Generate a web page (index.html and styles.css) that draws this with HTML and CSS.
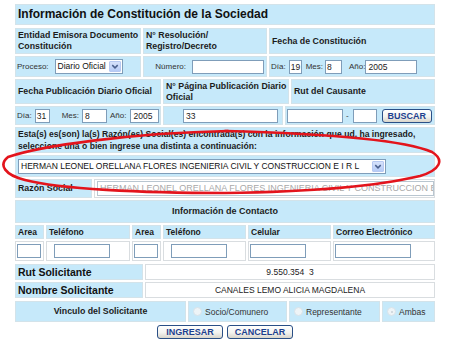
FILE: index.html
```html
<!DOCTYPE html>
<html lang="es">
<head>
<meta charset="utf-8">
<title>Información de Constitución de la Sociedad</title>
<link rel="stylesheet" href="styles.css">
</head>
<body>
<div class="page">
  <div class="title">Información de Constitución de la Sociedad</div>

  <div class="row r2">
    <div class="cell hd">Entidad Emisora Documento<br>Constitución</div>
    <div class="cell hd">N° Resolución/<br>Registro/Decreto</div>
    <div class="cell hd">Fecha de Constitución</div>
  </div>

  <div class="row r3">
    <div class="cell fl">
      <span class="lbl">Proceso:</span>
      <div class="sel s-proc"><span class="sv">Diario Oficial</span><span class="arr"><svg width="11" height="11" viewBox="0 0 11 11"><polyline points="2.5,4 5.5,7 8.5,4" fill="none" stroke="#4a5f8c" stroke-width="1.6"/></svg></span></div>
    </div>
    <div class="cell fl end">
      <span class="lbl mr6">Número:</span><span class="inp w72"></span>
    </div>
    <div class="cell fl">
      <span class="lbl">Día:</span><span class="inp sm w13 ml3">19</span>
      <span class="lbl ml4">Mes:</span><span class="inp sm w17 ml2">8</span>
      <span class="lbl ml7">Año:</span><span class="inp w52">2005</span>
    </div>
  </div>

  <div class="row r4">
    <div class="cell hd">Fecha Publicación Diario Oficial</div>
    <div class="cell hd">N° Página Publicación Diario<br>Oficial</div>
    <div class="cell hd">Rut del Causante</div>
  </div>

  <div class="row r5">
    <div class="cell fl">
      <span class="lbl">Día:</span><span class="inp sm w15 ml3">31</span>
      <span class="lbl ml12">Mes:</span><span class="inp w25 ml3">8</span>
      <span class="lbl ml3">Año:</span><span class="inp w29 ml4">2005</span>
    </div>
    <div class="cell fl">
      <span class="inp w95 ml18">33</span>
    </div>
    <div class="cell fl">
      <span class="inp w56">&nbsp;</span><span class="lbl ml3">-</span><span class="inp w24 ml4"></span>
      <button class="btn w50 ml5" type="button">BUSCAR</button>
    </div>
  </div>

  <div class="row r6">
    <div class="cell hd msg">Esta(s) es(son) la(s) Razón(es) Social(es) encontrada(s) con la información que ud. ha ingresado,<br>seleccione una o bien ingrese una distinta a continuación:</div>
  </div>

  <div class="row r7">
    <div class="cell fl">
      <div class="sel s-razon"><span class="sv">HERMAN LEONEL ORELLANA FLORES INGENIERIA CIVIL Y CONSTRUCCION E I R L</span><span class="arr"><svg width="11" height="11" viewBox="0 0 11 11"><polyline points="2.5,4 5.5,7 8.5,4" fill="none" stroke="#4a5f8c" stroke-width="1.6"/></svg></span></div>
    </div>
  </div>

  <div class="row r8">
    <div class="cell hd">Razón Social</div>
    <div class="cell wh fl">
      <span class="inp dis">HERMAN LEONEL ORELLANA FLORES INGENIERIA CIVIL Y CONSTRUCCION E I R L</span>
    </div>
  </div>

  <div class="row r9">
    <div class="cell hd center">Información de Contacto</div>
  </div>

  <div class="row r10">
    <div class="cell hd">Area</div>
    <div class="cell hd">Teléfono</div>
    <div class="cell hd">Area</div>
    <div class="cell hd">Teléfono</div>
    <div class="cell hd">Celular</div>
    <div class="cell hd">Correo Electrónico</div>
  </div>

  <div class="row r11">
    <div class="cell wh fl"><span class="inp w24"></span></div>
    <div class="cell wh fl"><span class="inp w56 ml6"></span></div>
    <div class="cell wh fl"><span class="inp w24"></span></div>
    <div class="cell wh fl"><span class="inp w56 ml6"></span></div>
    <div class="cell wh fl"><span class="inp w56"></span></div>
    <div class="cell wh fl"><span class="inp w76"></span></div>
  </div>

  <div class="row r12">
    <div class="cell big">Rut Solicitante</div>
    <div class="cell wh val">9.550.354&nbsp;&nbsp;3</div>
  </div>

  <div class="row r13">
    <div class="cell big">Nombre Solicitante</div>
    <div class="cell wh val">CANALES LEMO ALICIA MAGDALENA</div>
  </div>

  <div class="row r14">
    <div class="cell hd center">Vinculo del Solicitante</div>
    <div class="cell opt"><span class="radio"></span><span class="otx">Socio/Comunero</span></div>
    <div class="cell opt"><span class="radio"></span><span class="otx">Representante</span></div>
    <div class="cell opt"><span class="radio on"></span><span class="otx">Ambas</span></div>
  </div>

  <div class="actions">
    <button class="btn w66" type="button">INGRESAR</button>
    <button class="btn w66" type="button">CANCELAR</button>
  </div>
</div>

<svg class="mark" width="450" height="349" viewBox="0 0 450 349">
  <path d="M 225 131 C 300 133, 400 138, 432 152 C 445 160, 440 170, 420 176 C 370 188, 300 192, 225 193 C 140 193, 60 189, 25 180 C 5 175, -2 165, 8 157 C 40 146, 130 133, 228 131" fill="none" stroke="#e3141c" stroke-width="2.6" stroke-linecap="round"/>
</svg>
</body>
</html>
```

FILE: styles.css
```css
* { box-sizing: border-box; }
html, body { margin: 0; padding: 0; background: #fff; }
body {
  font-family: "Liberation Sans", Arial, sans-serif;
  color: #222;
  width: 450px;
  height: 349px;
  position: relative;
  overflow: hidden;
}
.page {
  width: 420px;
  margin: 4px 0 0 15px;
  display: flex;
  flex-direction: column;
}
.title {
  height: 21px;
  background: #c6e9fa;
  border: 1px solid #d3e3ea;
  font-weight: bold;
  font-size: 12px;
  line-height: 19px;
  padding-left: 2px;
  color: #111;
}
.row { display: grid; gap: 2px; margin-top: 2px; }
.cell {
  background: #c6e9fa;
  border: 1px solid #d3e3ea;
  display: flex;
  align-items: center;
  min-width: 0;
  overflow: hidden;
}
.cell.wh { background: #fff; border-color: #d9dde0; }
.hd {
  font-weight: bold;
  font-size: 8.8px;
  line-height: 11px;
  padding: 0 2px;
  color: #1c1c1c;
  white-space: nowrap;
}
.center { justify-content: center; }
.fl { padding-left: 1px; }
.fl.end { justify-content: flex-end; padding-right: 2px; }
.lbl { font-size: 8px; color: #333; white-space: nowrap; flex: none; }

.r2 { grid-template-columns: 126px 124px 166px; height: 26px; margin-top: 3px; }
.r3 { grid-template-columns: 126px 124px 166px; height: 21px; }
.r4 { grid-template-columns: 146px 126px 144px; height: 25px; }
.r5 { grid-template-columns: 146px 120px 150px; height: 19px; }
.r6 { grid-template-columns: 420px; height: 26px; }
.r7 { grid-template-columns: 420px; height: 22px; }
.r8 { grid-template-columns: 77px 341px; height: 19px; }
.r9 { grid-template-columns: 420px; height: 23px; }
.r10 { grid-template-columns: 29px 84px 29px 83px 83px 102px; height: 14px; }
.r11 { grid-template-columns: 29px 84px 29px 83px 83px 102px; height: 20px; }
.r12 { grid-template-columns: 128px 290px; height: 16px; margin-top: 3px; }
.r13 { grid-template-columns: 128px 290px; height: 16px; }
.r14 { grid-template-columns: 171px 99px 91px 53px; height: 21px; margin-top: 3px; }

.msg { line-height: 12px; font-size: 8.6px; }
.r9 .hd { font-size: 9px; }
.r10 .hd { font-size: 8.5px; }

.inp {
  display: block;
  flex: none;
  height: 14px;
  border: 1px solid #7f9db9;
  background: #fff;
  font-size: 8.5px;
  line-height: 12px;
  padding: 0 2px;
  color: #222;
  white-space: nowrap;
  overflow: hidden;
}
.inp.sm { padding: 0 1px; }
.inp.dis {
  width: 337px;
  margin-left: 1px;
  height: 15px;
  color: #a9a9a9;
  border-color: #b9c6d0;
  font-size: 9px;
}

.sel {
  display: flex;
  flex: none;
  height: 15px;
  border: 1px solid #7f9db9;
  background: #fff;
}
.sv {
  flex: 1;
  font-size: 8.5px;
  line-height: 13px;
  padding: 0 2px;
  white-space: nowrap;
  overflow: hidden;
  color: #111;
}
.arr {
  width: 12px;
  flex: none;
  margin: 1px;
  border: 1px solid #b7c9f2;
  border-radius: 1px;
  background: linear-gradient(180deg, #d6e2fb 0%, #b6cbf6 100%);
  display: flex;
  align-items: center;
  justify-content: center;
}
.arr svg { display: block; }
.s-proc { width: 68px; margin-left: 6px; }
.s-razon { width: 368px; margin-left: 1px; }

.btn {
  flex: none;
  height: 14px;
  padding: 0;
  border: 1px solid #2a4f86;
  border-radius: 3px;
  background: linear-gradient(180deg, #ffffff 0%, #f3f3ef 55%, #d9d5cb 100%);
  font-family: "Liberation Sans", Arial, sans-serif;
  font-weight: bold;
  font-size: 9px;
  line-height: 12px;
  color: #1d3f8e;
}

.big {
  font-weight: bold;
  font-size: 10.5px;
  padding-left: 2px;
  color: #111;
  white-space: nowrap;
}
.val {
  justify-content: center;
  font-size: 8.5px;
  color: #222;
  white-space: nowrap;
}

.opt { padding-left: 4px; }
.radio {
  width: 9px;
  height: 9px;
  flex: none;
  border-radius: 50%;
  border: 1px solid #d7e2e9;
  background: #eef4f7;
  position: relative;
}
.radio.on::after {
  content: "";
  position: absolute;
  left: 2.5px;
  top: 2.5px;
  width: 2px;
  height: 2px;
  border-radius: 50%;
  background: #c8d2d8;
}
.otx { font-size: 8.5px; color: #333; margin-left: 3px; white-space: nowrap; }

.actions {
  display: flex;
  justify-content: center;
  gap: 4px;
  margin-top: 3px;
}

.w13 { width: 13px; } .w15 { width: 15px; } .w17 { width: 17px; }
.w24 { width: 24px; } .w25 { width: 25px; } .w29 { width: 29px; }
.w50 { width: 50px; } .w52 { width: 52px; } .w56 { width: 56px; }
.w66 { width: 66px; } .w72 { width: 72px; } .w76 { width: 76px; }
.w95 { width: 95px; }
.ml2 { margin-left: 2px; } .ml3 { margin-left: 3px; } .ml4 { margin-left: 4px; }
.ml5 { margin-left: 5px; } .ml6 { margin-left: 6px; } .ml7 { margin-left: 7px; }
.ml12 { margin-left: 12px; } .ml18 { margin-left: 18px; }
.mr6 { margin-right: 6px; }

.mark {
  position: absolute;
  left: 0;
  top: 0;
  pointer-events: none;
}
```
